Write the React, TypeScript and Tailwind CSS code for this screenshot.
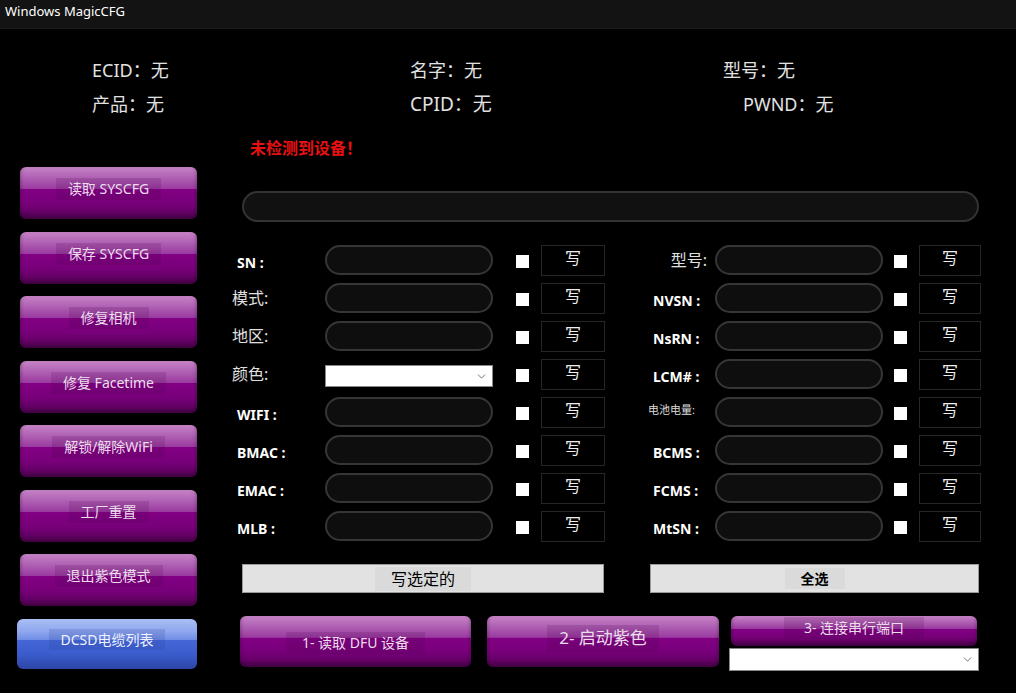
import { ChevronDown } from "lucide-react";

const cjk = "font-['Noto_Sans','Noto_Sans_CJK_SC',sans-serif]";

const sideButtons: string[] = [
  "读取 SYSCFG",
  "保存 SYSCFG",
  "修复相机",
  "修复 Facetime",
  "解锁/解除WiFi",
  "工厂重置",
  "退出紫色模式",
];

interface Field {
  label: string;
  bold?: boolean;
  small?: boolean;
  select?: boolean;
}

const leftFields: Field[] = [
  { label: "SN :", bold: true },
  { label: "模式:" },
  { label: "地区:" },
  { label: "颜色:", select: true },
  { label: "WIFI :", bold: true },
  { label: "BMAC :", bold: true },
  { label: "EMAC :", bold: true },
  { label: "MLB :", bold: true },
];

const rightFields: Field[] = [
  { label: "型号:" },
  { label: "NVSN :", bold: true },
  { label: "NsRN :", bold: true },
  { label: "LCM# :", bold: true },
  { label: "电池电量:", small: true },
  { label: "BCMS :", bold: true },
  { label: "FCMS :", bold: true },
  { label: "MtSN :", bold: true },
];

const PurpleButton = ({
  text,
  className = "",
  textClass = "text-[14px]",
}: {
  text: string;
  className?: string;
  textClass?: string;
}) => (
  <div
    className={`flex items-center justify-center rounded-[6px] bg-[linear-gradient(to_bottom,#c683c6_0%,#b062b4_20%,#9a3aa0_42%,#820084_43%,#78007a_70%,#560058_100%)] shadow-[inset_0_-3px_4px_rgba(40,0,40,0.5)] ${className}`}
  >
    <span
      className={`px-3 pb-[1px] bg-[rgba(70,0,70,0.16)] text-[#ecdcec] ${textClass}`}
    >
      {text}
    </span>
  </div>
);

const SelectBox = ({ className = "" }: { className?: string }) => (
  <div
    className={`flex items-center justify-end bg-white border border-[#888] pr-1 ${className}`}
  >
    <ChevronDown size={13} strokeWidth={1.5} className="text-[#555]" />
  </div>
);

const FieldRow = ({
  field,
  labelW,
  inputW,
  gapA,
  gapB,
  btnW,
}: {
  field: Field;
  labelW: string;
  inputW: string;
  gapA: string;
  gapB: string;
  btnW: string;
}) => (
  <div className="flex h-[38px] items-center">
    <div
      className={`${labelW} ${
        field.bold
          ? "text-[14px] font-bold text-white pl-[5px] pt-[4px]"
          : field.small
          ? "text-[11px] text-[#ddd] -mt-[4px]"
          : "text-[16px] text-[#e0e0e0]"
      } ${field.label === "型号:" ? "text-right pr-[8px]" : ""}`}
    >
      {field.label}
    </div>
    {field.select ? (
      <SelectBox className={`${inputW} h-[22px] mt-[4px]`} />
    ) : (
      <div
        className={`${inputW} h-[30px] rounded-full bg-[#0e0e0e] border-2 border-[#363636]`}
      />
    )}
    <div className={`${gapA} h-[13px] w-[13px] bg-white mt-[3px]`} />
    <div
      className={`${gapB} ${btnW} h-[31px] flex items-center justify-center border border-[#262626] text-[16px] text-[#eee] pb-[4px]`}
    >
      写
    </div>
  </div>
);

export default function App() {
  return (
    <div className={`w-[1016px] h-[693px] bg-black overflow-hidden ${cjk}`}>
      {/* title bar */}
      <div className="h-[29px] bg-[#131313] border-b border-[#1c1c1c] flex items-start pl-[5px] pt-[2px]">
        <span className="text-[13px] text-white">Windows MagicCFG</span>
      </div>

      {/* device info */}
      <div className="pt-[24px] pl-[92px] text-[18px] text-[#e2e2e2]">
        <div className="flex h-[34px] items-center">
          <span className="w-[318px]">ECID：无</span>
          <span className="w-[313px]">名字：无</span>
          <span>型号：无</span>
        </div>
        <div className="flex h-[34px] items-center">
          <span className="w-[318px]">产品：无</span>
          <span className="w-[313px] text-[19px]">CPID：无</span>
          <span className="ml-[20px]">PWND：无</span>
        </div>
      </div>

      <div className="flex">
        {/* side buttons */}
        <div className="w-[197px] pl-[20px] pt-[46px] flex flex-col gap-[12.5px]">
          {sideButtons.map((b, i) => (
            <PurpleButton
              key={i}
              text={b}
              className="w-[177px] h-[52px] pb-[8px]"
            />
          ))}
          <div className="w-[180px] -ml-[3px] h-[50px] pb-[8px] flex items-center justify-center rounded-[6px] bg-[linear-gradient(to_bottom,#a9bff5_0%,#8ea7ee_25%,#6f8ce6_42%,#4466d6_43%,#3b5ccc_70%,#2c46a6_100%)]">
            <span className="px-3 bg-[rgba(40,60,150,0.18)] text-[14px] text-[#eef2ff]">
              DCSD电缆列表
            </span>
          </div>
        </div>

        {/* main panel */}
        <div className="pl-[35px] flex-1">
          <div className="mt-[16px] ml-[18px] h-[22px] text-[16px] font-bold text-[#e81010] flex items-center">
            未检测到设备！
          </div>
          <div className="mt-[32px] ml-[10px] w-[737px] h-[31px] rounded-full bg-[#111111] border-2 border-[#333333]" />

          <div className="mt-[19px] flex">
            <div className="flex flex-col">
              {leftFields.map((f, i) => (
                <FieldRow
                  key={i}
                  field={f}
                  labelW="w-[93px]"
                  inputW="w-[168px]"
                  gapA="ml-[23px]"
                  gapB="ml-[12px]"
                  btnW="w-[64px]"
                />
              ))}
            </div>
            <div className="flex flex-col ml-[43px]">
              {rightFields.map((f, i) => (
                <FieldRow
                  key={i}
                  field={f}
                  labelW="w-[67px]"
                  inputW="w-[168px]"
                  gapA="ml-[11px]"
                  gapB="ml-[12px]"
                  btnW="w-[62px]"
                />
              ))}
            </div>
          </div>

          <div className="mt-[19px] flex">
            <div className="ml-[10px] w-[362px] h-[29px] bg-[#e2e2e2] border border-[#9a9a9a] flex items-center justify-center">
              <span className="px-4 bg-[#dadada] text-[16px] text-black">写选定的</span>
            </div>
            <div className="ml-[46px] w-[329px] h-[29px] bg-[#e2e2e2] border border-[#9a9a9a] flex items-center justify-center">
              <span className="px-4 bg-[#dadada] text-[14px] font-bold text-black">全选</span>
            </div>
          </div>

          <div className="mt-[23px] flex items-start">
            <PurpleButton
              text="1- 读取 DFU 设备"
              className="ml-[8px] w-[231px] h-[51px] pt-[2px]"
              textClass="text-[14px] px-4"
            />
            <PurpleButton
              text="2- 启动紫色"
              className="ml-[16px] w-[232px] h-[51px] pb-[6px]"
              textClass="text-[17px] px-2"
            />
            <div className="ml-[10px] flex flex-col">
              <PurpleButton
                text="3- 连接串行端口"
                className="ml-[2px] w-[246px] h-[30px] pb-[6px] rounded-[5px]"
                textClass="text-[14px] px-5"
              />
              <SelectBox className="mt-[2px] w-[250px] h-[23px]" />
            </div>
          </div>
        </div>
      </div>
    </div>
  );
}
